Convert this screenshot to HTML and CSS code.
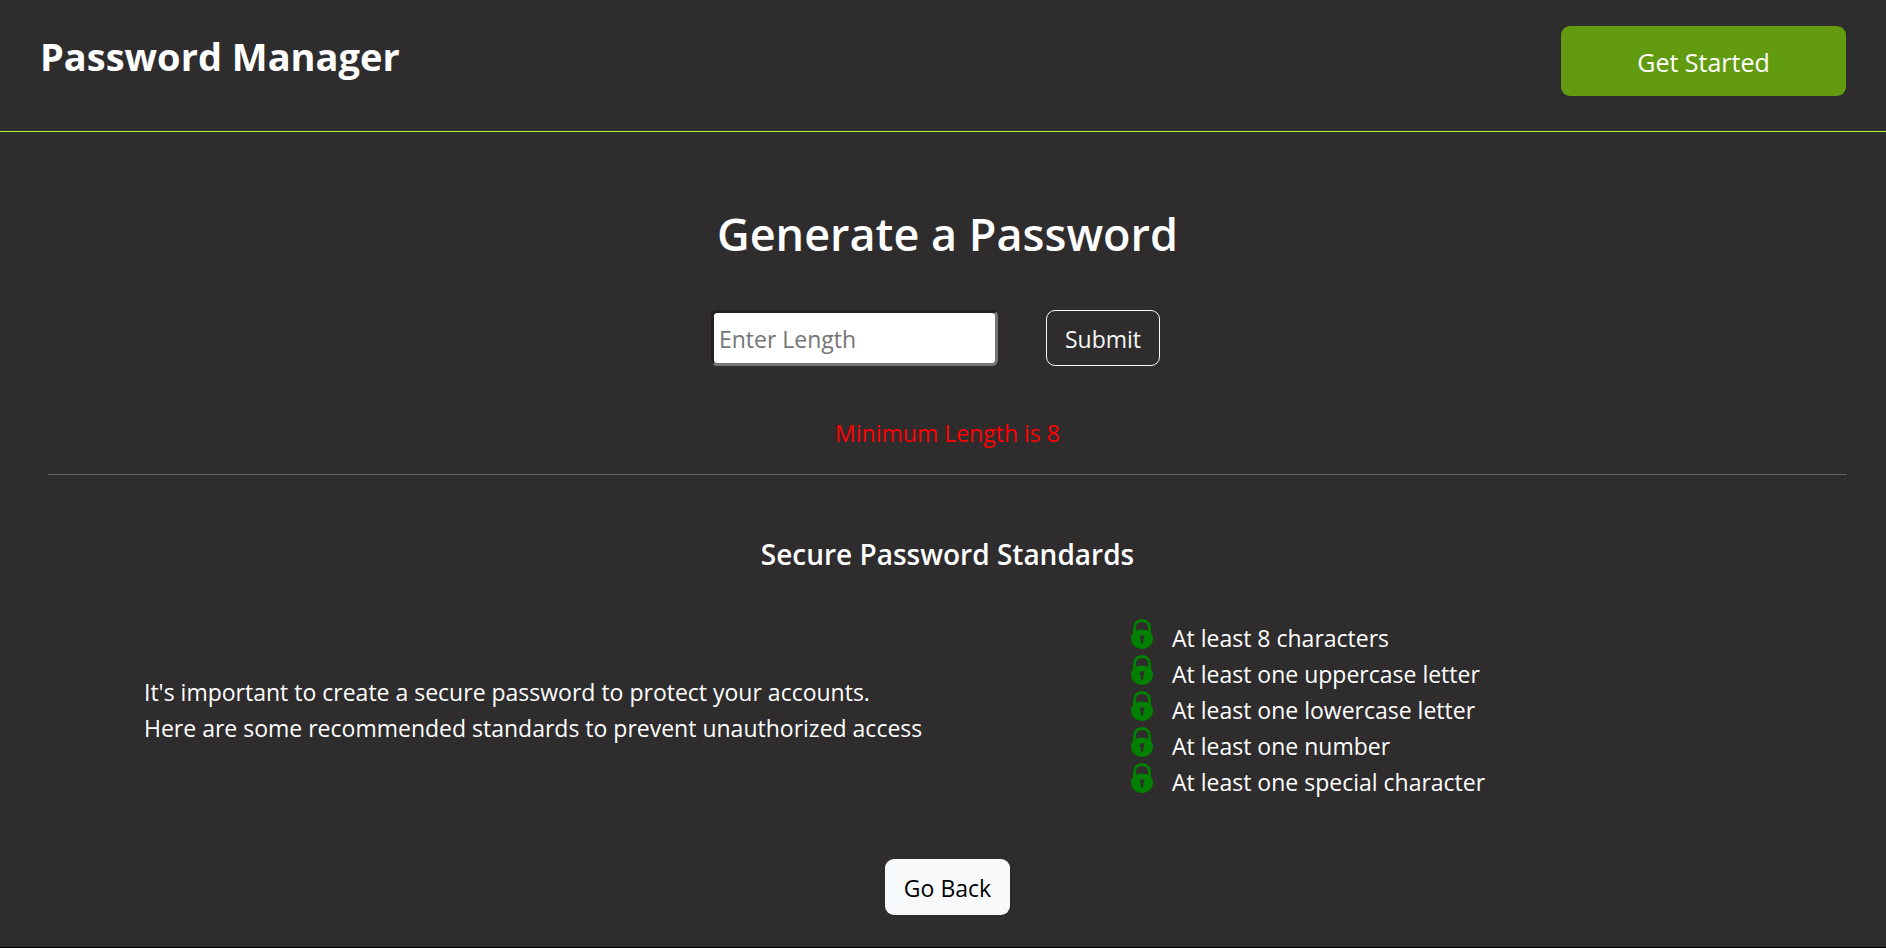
FILE: index.html
```html
<!DOCTYPE html>
<html lang="en">
<head>
  <meta charset="utf-8">
  <title>Password Manager</title>
  <link rel="stylesheet" href="styles.css">
</head>
<body>
  <svg class="sprite" aria-hidden="true">
    <symbol id="lock" viewBox="0 0 22 30">
      <path d="M3.500 15V9C3.500 4.500 6.500 1.500 11 1.500S18.500 4.500 18.500 9V15" fill="none" stroke="currentColor" stroke-width="3"/>
      <path fill="currentColor" fill-rule="evenodd" d="M11 10.500C17.500 10.500 22 14 22 19.500C22 25.500 17 30 11 30S0 25.500 0 19.500C0 14 4.500 10.500 11 10.500ZM11 16a2.300 2.300 0 0 0-1.200 4.200V24.500h2.400v-4.300A2.300 2.300 0 0 0 11 16Z"/>
    </symbol>
  </svg>
  <header class="header">
    <h2 class="brand">Password Manager</h2>
    <button class="btn btn-start" type="button">Get Started</button>
  </header>
  <main class="main">
    <h1 class="title">Generate a Password</h1>
    <form class="form">
      <input class="length" type="text" placeholder="Enter Length" aria-label="Password length">
      <button class="btn btn-outline" type="button">Submit</button>
    </form>
    <p class="error">Minimum Length is 8</p>
    <hr class="rule">
    <h3 class="subtitle">Secure Password Standards</h3>
    <section class="standards">
      <p class="intro">It's important to create a secure password to protect your accounts.<br>Here are some recommended standards to prevent unauthorized access</p>
      <ul class="list">
        <li class="item"><svg class="icon" aria-hidden="true"><use href="#lock"/></svg>At least 8 characters</li>
        <li class="item"><svg class="icon" aria-hidden="true"><use href="#lock"/></svg>At least one uppercase letter</li>
        <li class="item"><svg class="icon" aria-hidden="true"><use href="#lock"/></svg>At least one lowercase letter</li>
        <li class="item"><svg class="icon" aria-hidden="true"><use href="#lock"/></svg>At least one number</li>
        <li class="item"><svg class="icon" aria-hidden="true"><use href="#lock"/></svg>At least one special character</li>
      </ul>
    </section>
    <button class="btn btn-light" type="button">Go Back</button>
  </main>
</body>
</html>
```
FILE: styles.css
```css
* {
  box-sizing: border-box;
  margin: 0;
  padding: 0;
}

body {
  background: #000;
  color: #fff;
  font-family: "Segoe UI", "Open Sans", "Noto Sans", sans-serif;
  font-size: 23px;
  line-height: 36px;
}

.sprite {
  display: none;
}

.header {
  display: flex;
  justify-content: space-between;
  align-items: flex-start;
  padding: 26px 40px 35px;
  background: #2e2c2d;
  border-bottom: 1px solid greenyellow;
}

.brand {
  font-size: 38px;
  font-weight: 700;
  line-height: 60px;
}

.btn {
  padding: 10px 18px 8px;
  border: 1px solid transparent;
  border-radius: 9px;
  font: inherit;
}

.btn-start {
  width: 285px;
  height: 70px;
  background: #629b0f;
  color: #fff;
  font-size: 25px;
}

.main {
  display: flex;
  flex-direction: column;
  align-items: center;
  padding: 74px 39px 32px 48px;
  background: #2e2c2d;
}

.title {
  font-size: 45px;
  font-weight: 600;
  line-height: 56px;
}

.form {
  display: flex;
  gap: 48px;
  margin-top: 48px;
  padding-right: 24px;
}

.length {
  width: 287px;
  height: 56px;
  padding: 2px 5px 0;
  border: 3px inset #767676;
  border-radius: 6px;
  background: #fff;
  font: inherit;
}

.length::placeholder {
  color: #757575;
}

.btn-outline {
  border-color: #f8f9fa;
  background: transparent;
  color: #f8f9fa;
}

.error {
  margin-top: 49px;
  color: red;
}

.rule {
  width: 100%;
  height: 1px;
  margin-top: 23px;
  border: 0;
  background: #626162;
}

.subtitle {
  margin-top: 61px;
  font-size: 28px;
  font-weight: 600;
  line-height: 36px;
}

.standards {
  display: grid;
  grid-template-columns: 987fr 716fr;
  align-items: center;
  width: 100%;
  margin-top: 47px;
  padding-left: 96px;
}

.intro {
  padding-top: 2px;
}

.list {
  list-style: none;
}

.item {
  display: flex;
  gap: 19px;
  height: 36px;
  line-height: 38px;
}

.icon {
  width: 22px;
  height: 30px;
  color: green;
}

.btn-light {
  margin-top: 60px;
  background: #f8f9fa;
  color: #000;
}
```
